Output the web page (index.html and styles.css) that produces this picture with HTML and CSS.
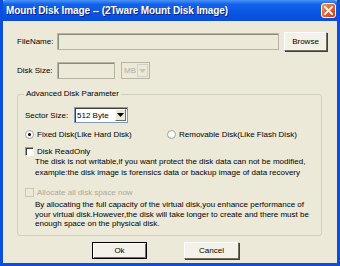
FILE: index.html
```html
<!DOCTYPE html>
<html lang="en">
<head>
  <meta charset="UTF-8">
  <title>Mount Disk Image</title>
  <link rel="stylesheet" href="styles.css">
</head>
<body>
  <div class="window">
    <div class="titlebar">
      <span class="title">Mount Disk Image -- (2Tware Mount Disk Image)</span>
      <span class="close">
        <svg width="11" height="11" viewBox="0 0 11 11"><path d="M2 2 L9 9 M9 2 L2 9" stroke="#fff" stroke-width="1.8" stroke-linecap="square"/></svg>
      </span>
    </div>
    <div class="content">
      <div class="row row-file">
        <span class="label">FileName:</span>
        <span class="edit edit-file"></span>
        <span class="button browse">Browse</span>
      </div>
      <div class="row row-size">
        <span class="label">Disk Size:</span>
        <span class="edit edit-size"></span>
        <span class="combo combo-mb disabled">
          <span class="combo-text">MB</span>
          <span class="combo-arrow"><svg width="7" height="4" viewBox="0 0 7 4"><path d="M0 0 H7 L3.5 4 Z" fill="#c9c7ba"/></svg></span>
        </span>
      </div>

      <fieldset class="group">
        <legend>Advanced Disk Parameter</legend>
        <div class="row row-sector">
          <span class="label-sector">Sector Size:</span>
          <span class="combo combo-sector">
            <span class="combo-text">512 Byte</span>
            <span class="combo-arrow"><svg width="7" height="4" viewBox="0 0 7 4"><path d="M0 0 H7 L3.5 4 Z" fill="#000"/></svg></span>
          </span>
        </div>
        <div class="row row-radio">
          <span class="opt opt-fixed"><span class="radio checked"></span>Fixed Disk(Like Hard Disk)</span>
          <span class="opt"><span class="radio"></span>Removable Disk(Like Flash Disk)</span>
        </div>
        <div class="opt check-row"><span class="check"></span>Disk ReadOnly</div>
        <p class="note note-readonly">The disk is not writable,if you want protect the disk data can not be modified,<br>example:the disk image is forensics data or backup image of data recovery</p>
        <div class="opt check-row disabled"><span class="check"></span>Allocate all disk space now</div>
        <p class="note note-alloc">By allocating the full capacity of the virtual disk,you enhance performance of<br>your virtual disk.However,the disk will take longer to create and there must be<br>enough space on the physical disk.</p>
      </fieldset>

      <div class="buttons">
        <span class="button ok">Ok</span>
        <span class="button cancel">Cancel</span>
      </div>
    </div>
  </div>
</body>
</html>
```

FILE: styles.css
```css
body {
  margin: 0;
  font-family: "Liberation Sans", Arial, sans-serif;
  font-size: 8px;
  color: #000;
  white-space: nowrap;
}
.window {
  width: 340px;
  height: 266px;
  box-sizing: border-box;
  background: #ece9d8;
  border: 3px solid #0a4ee0;
  border-top: none;
  overflow: hidden;
}
.titlebar {
  height: 21px;
  margin: 0 -3px;
  padding: 0 4px 0 6px;
  display: flex;
  align-items: center;
  justify-content: space-between;
  background: linear-gradient(#4a94f8, #1462ec 20%, #0a56e2 60%, #0a4cd8);
  border-radius: 6px 6px 0 0;
}
.title {
  color: #fff;
  font-weight: bold;
  font-size: 10px;
  letter-spacing: -0.1px;
  text-shadow: 1px 1px 0 #0a1e8a;
}
.close {
  flex-shrink: 0;
  width: 15px;
  height: 15px;
  box-sizing: border-box;
  border: 1px solid #fff;
  border-radius: 3px;
  background: linear-gradient(135deg, #f09a70, #e05a2e 60%, #c8401c);
  display: flex;
  align-items: center;
  justify-content: center;
}
.content {
  padding: 11px 0 0 14px;
}
.row {
  display: flex;
  align-items: center;
}
.row > span {
  flex-shrink: 0;
}
.label {
  width: 40px;
}
.edit {
  height: 17px;
  box-sizing: border-box;
  border: 1px solid #b7b4a6;
  background: #ece9d8;
  box-shadow: inset 1px 1px 0 #8c8a7e;
}
.edit-file {
  width: 222px;
}
.edit-size {
  width: 58px;
}
.button {
  box-sizing: border-box;
  height: 19px;
  display: flex;
  align-items: center;
  justify-content: center;
  background: #f3f1e8;
  border: 1px solid #fff;
  border-right-color: #716f64;
  border-bottom-color: #716f64;
  box-shadow: 1px 1px 0 #404040;
}
.browse {
  width: 43px;
  margin-left: 5px;
}
.row-size {
  margin-top: 11px;
}
.combo {
  box-sizing: border-box;
  height: 17px;
  border: 1px solid #b8b5a8;
  background: #ece9d8;
  display: flex;
  align-items: center;
  justify-content: space-between;
}
.combo-mb {
  width: 29px;
  margin-left: 6px;
  color: #b0ad9e;
}
.combo-text {
  padding-left: 2px;
}
.combo-arrow {
  width: 11px;
  height: 13px;
  margin-right: 1px;
  box-sizing: border-box;
  border: 1px solid #d4d0c8;
  display: flex;
  align-items: center;
  justify-content: center;
}
.combo-sector {
  width: 54px;
  height: 16px;
  margin-left: 1px;
  background: #fff;
  border: 1px solid #7f9db9;
  box-shadow: inset 1px 1px 0 #404040;
}
.combo-sector .combo-arrow {
  height: 12px;
  background: #ece9d8;
  border: 1px solid #fff;
  border-right-color: #716f64;
  border-bottom-color: #716f64;
}
.group {
  margin: 10px 0 0 0;
  width: 305px;
  height: 147px;
  box-sizing: border-box;
  padding: 8px 6px 0 7px;
  border: 1px solid #d0d0bf;
  border-radius: 3px;
}
.group legend {
  padding: 0 2px;
  margin-left: -1px;
  line-height: 10px;
}
.label-sector {
  width: 48px;
}
.row-radio {
  margin-top: 5px;
  height: 12px;
}
.opt {
  display: flex;
  align-items: center;
}
.opt-fixed {
  width: 142px;
}
.radio {
  width: 9px;
  height: 9px;
  box-sizing: border-box;
  border: 1px solid #a6a49a;
  border-radius: 50%;
  background: #fff;
  margin-right: 3px;
  position: relative;
}
.radio.checked::after {
  content: "";
  position: absolute;
  left: 2px;
  top: 2px;
  width: 3px;
  height: 3px;
  border-radius: 50%;
  background: #000;
}
.check-row {
  margin-top: 6px;
  height: 10px;
}
.check {
  width: 9px;
  height: 9px;
  box-sizing: border-box;
  border: 1px solid #fff;
  border-top-color: #9e9c90;
  border-left-color: #9e9c90;
  background: #fff;
  box-shadow: inset 1px 1px 0 #404040;
  margin-right: 3px;
}
.check-row.disabled {
  margin-top: 9px;
  color: #aca899;
}
.check-row.disabled .check {
  background: #ece9d8;
  box-shadow: none;
  border-color: #c9c7ba;
}
.note {
  margin: 0 0 0 10px;
  line-height: 10px;
}
.note-readonly {
  margin-top: 1px;
  line-height: 10.5px;
}
.note-alloc {
  margin-top: 3px;
  line-height: 9.5px;
}
.buttons {
  display: flex;
  margin: 6px 0 0 75px;
  gap: 37px;
}
.ok,
.cancel {
  width: 55px;
  height: 17px;
}
.ok {
  border: 1px solid #000;
  box-shadow: inset 1px 1px 0 #fff, inset -1px -1px 0 #716f64;
}
```
